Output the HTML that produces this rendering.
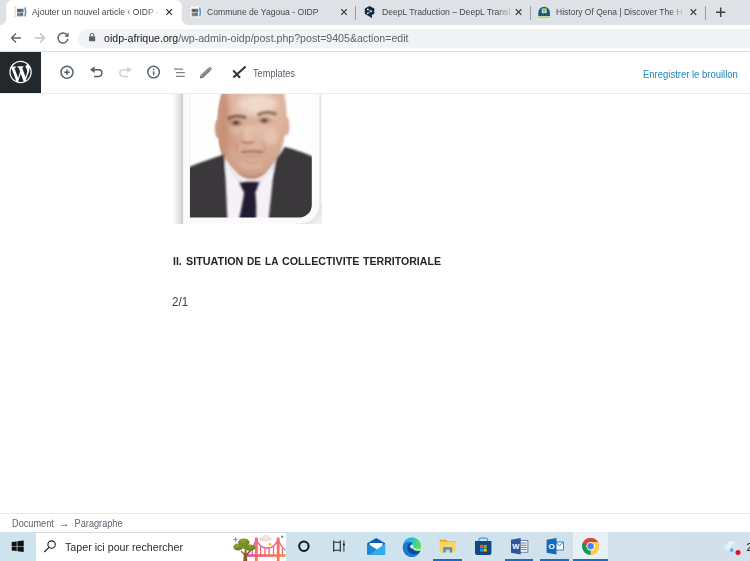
<!DOCTYPE html>
<html lang="fr">
<head>
<meta charset="utf-8">
<title>Ajouter un nouvel article ‹ OIDP</title>
<style>
html,body{margin:0;padding:0;}
body{width:750px;height:561px;overflow:hidden;background:#fff;position:relative;font-family:"Liberation Sans",sans-serif;color:#1e1e1e;}
.abs{position:absolute;}
.t{position:absolute;white-space:nowrap;line-height:1;filter:blur(0.3px);}
/* chrome tab strip */
#tabstrip{left:0;top:0;width:750px;height:25px;background:#dee1e6;}
#tab1{left:6px;top:0;width:176px;height:25px;background:#fff;border-radius:7px 7px 0 0;}
#toolbar{left:0;top:25px;width:750px;height:26px;background:#fff;border-bottom:1px solid #dcdde0;}
#omni{left:78px;top:29px;width:700px;height:19px;background:#f1f3f4;border-radius:10px;}
.tabtxt{font-size:9.500px;color:#45494d;top:7.400px;transform-origin:0 50%;}
.hw{top:255.200px;font-size:11.700px;font-weight:bold;color:#26262a;transform-origin:0 50%;}
.fade{-webkit-mask-image:linear-gradient(90deg,#000 0,#000 90%,rgba(0,0,0,0.200) 100%);mask-image:linear-gradient(90deg,#000 0,#000 90%,rgba(0,0,0,0.200) 100%);}
.sep{position:absolute;top:5.500px;width:1px;height:14px;background:#9a9fa5;}
/* wp header */
#wplogo{left:0;top:52px;width:41px;height:40.500px;background:#23282d;}
#wphead{left:0;top:52px;width:750px;height:40.500px;background:#fff;border-bottom:1.500px solid #eaecee;}
/* footer */
#wpfoot{left:0;top:513.200px;width:750px;height:19px;background:#fff;border-top:1px solid #e6e7e9;}
#taskbar{left:0;top:532px;width:750px;height:29px;background:linear-gradient(90deg,#cde4ee 0%,#cfe3ee 55%,#d3dfea 100%);}
#search{left:35.500px;top:532px;width:250.200px;height:29px;background:#fff;border-top:1px solid #d9d9d9;box-sizing:border-box;}
.ul{position:absolute;top:559px;height:2px;background:#1372c4;}
</style>
</head>
<body>

<!-- ===== Chrome tab strip ===== -->
<div id="tabstrip" class="abs"></div>
<svg class="abs" style="left:0;top:0;" width="200" height="26" viewBox="0 0 200 26"><path d="M0 25.500V25C3.500 25 6.300 22.200 6.300 18.700V6.300C6.300 2.800 9.100 0 12.600 0H175.400C178.900 0 181.700 2.800 181.700 6.300V18.700C181.700 22.200 184.500 25 188 25V25.500Z" fill="#fff"/></svg>
<div class="t tabtxt fade" style="left:32.300px;transform:scaleX(0.912);">Ajouter un nouvel article ‹ OIDP -</div>
<div class="t tabtxt" style="left:206.800px;transform:scaleX(0.905);">Commune de Yagoua - OIDP</div>
<div class="t tabtxt fade" style="left:382px;transform:scaleX(0.908);">DeepL Traduction – DeepL Transl</div>
<div class="t tabtxt fade" style="left:556.400px;transform:scaleX(0.896);">History Of Qena | Discover The H</div>
<div class="sep" style="left:355px;"></div>
<div class="sep" style="left:530px;"></div>
<div class="sep" style="left:705px;"></div>

<!-- ===== Chrome toolbar ===== -->
<div id="toolbar" class="abs"></div>
<div id="omni" class="abs"></div>
<div class="t" id="url" style="left:104px;top:32.5px;font-size:10.6px;color:#5f6368;"><span style="color:#202124">oidp-afrique.org</span>/wp-admin-oidp/post.php?post=9405&amp;action=edit</div>


<!-- chrome icons -->
<svg class="abs" style="left:0;top:0;" width="750" height="52" viewBox="0 0 750 52">
  <!-- tab close buttons -->
  <g stroke="#3c4043" stroke-width="1.25" stroke-linecap="butt" fill="none">
    <path d="M166.3 9.3l5.6 5.6M171.9 9.3l-5.6 5.6"/>
    <path d="M341.2 9.3l5.6 5.6M346.8 9.3l-5.6 5.6"/>
    <path d="M515.8 9.3l5.6 5.6M521.4 9.3l-5.6 5.6"/>
    <path d="M690.6 9.3l5.6 5.6M696.2 9.3l-5.6 5.6"/>
  </g>
  <!-- new tab plus -->
  <path d="M716 12.2h9.4M720.7 7.5v9.4" stroke="#3c4043" stroke-width="1.5" fill="none"/>
  <!-- back -->
  <path d="M21 38H12M16 33.6l-4.4 4.4 4.4 4.4" stroke="#5f6368" stroke-width="1.4" fill="none"/>
  <!-- forward -->
  <path d="M34.6 38H44M40 33.6l4.4 4.4-4.4 4.4" stroke="#c1c4c8" stroke-width="1.4" fill="none"/>
  <!-- reload -->
  <path d="M67.2 35.2A5 5 0 1 0 68 38.8" stroke="#5f6368" stroke-width="1.4" fill="none"/>
  <path d="M68.6 32.6v4.2h-4.2z" fill="#5f6368"/>
  <!-- lock -->
  <rect x="89" y="36.3" width="6.2" height="5" rx="0.6" fill="#5f6368"/>
  <path d="M90.4 36.5v-1.4a1.7 1.7 0 0 1 3.4 0v1.4" stroke="#5f6368" stroke-width="1" fill="none"/>
  <!-- favicons -->
  <defs><filter id="fb" x="-20%" y="-20%" width="140%" height="140%"><feGaussianBlur stdDeviation="0.350"/></filter></defs>
  <g filter="url(#fb)">
    <rect x="14.500" y="6.500" width="12.200" height="11" fill="#fafafa"/>
    <path d="M15.100 6.500v11" stroke="#f1b983" stroke-width="1" stroke-dasharray="1.600 0.700" fill="none"/>
    <rect x="17" y="8.800" width="6.600" height="3.400" fill="#6e6e6e"/>
    <rect x="17" y="12.600" width="6.200" height="3.700" fill="#858585"/>
    <rect x="18.200" y="9.600" width="2" height="1.400" fill="#4a4a4a"/>
    <rect x="21" y="13.300" width="1.800" height="1.600" fill="#5a5a5a"/>
    <path d="M25.100 7.300C25.700 10 25.700 13.500 25.100 16.300" stroke="#3a96d4" stroke-width="1.500" fill="none"/>
  </g>
  <g filter="url(#fb)" transform="translate(174.700 0)">
    <rect x="14.500" y="6.500" width="12.200" height="11" fill="#fafafa"/>
    <path d="M15.100 6.500v11" stroke="#f1b983" stroke-width="1" stroke-dasharray="1.600 0.700" fill="none"/>
    <rect x="17" y="8.800" width="6.600" height="3.400" fill="#6e6e6e"/>
    <rect x="17" y="12.600" width="6.200" height="3.700" fill="#858585"/>
    <rect x="18.200" y="9.600" width="2" height="1.400" fill="#4a4a4a"/>
    <rect x="21" y="13.300" width="1.800" height="1.600" fill="#5a5a5a"/>
    <path d="M25.100 7.300C25.700 10 25.700 13.500 25.100 16.300" stroke="#3a96d4" stroke-width="1.500" fill="none"/>
  </g>
  <!-- DeepL -->
  <path d="M369.500 6L374.300 8.600V13.700L371.900 15V18.200L369.300 16.400L364.800 13.700V8.600Z" fill="#0f2b46"/>
  <path d="M367.700 9.400L371.300 11.200L367.700 13.300" stroke="#fff" stroke-width="0.600" fill="none"/>
  <circle cx="367.700" cy="9.400" r="0.800" fill="#fff"/><circle cx="371.300" cy="11.200" r="0.800" fill="#fff"/><circle cx="367.700" cy="13.300" r="0.800" fill="#fff"/>
  <!-- History of Qena -->
  <path d="M538.300 16.100V12.600A5.850 5.850 0 0 1 550 12.600V16.100Z" fill="#1d5a80"/>
  <rect x="541.800" y="8.600" width="4.800" height="4.600" fill="#cfe6dc"/>
  <rect x="542.900" y="8" width="2.400" height="4.200" fill="#84c441"/>
  <path d="M540.600 13.600h7.200v2.300h-7.200z" fill="#173f5c"/>
  <path d="M541.800 13.800v2M543.600 13.800v2M545.400 13.800v2M547 13.800v2" stroke="#6f9bb5" stroke-width="0.500"/>
  <rect x="538.500" y="16.500" width="11.200" height="1.300" fill="#9ad65c"/>
</svg>

<!-- ===== WordPress editor header ===== -->
<div id="wphead" class="abs"></div>
<div id="wplogo" class="abs"></div>
<div class="t" id="tpl" style="left:252.800px;top:69.200px;font-size:10.300px;color:#555d66;transform-origin:0 50%;transform:scaleX(0.894);">Templates</div>
<div class="t" id="save" style="left:643.400px;top:69.500px;font-size:10.300px;color:#1a86bf;transform-origin:0 50%;transform:scaleX(0.921);">Enregistrer le brouillon</div>


<!-- wp header icons -->
<svg class="abs" style="left:0;top:52px;" width="320" height="41" viewBox="0 52 320 41">
  <g transform="translate(9.4 60.8) scale(1.12)">
    <path fill="#fff" d="M20 10c0-5.51-4.49-10-10-10C4.48 0 0 4.49 0 10c0 5.52 4.48 10 10 10 5.51 0 10-4.48 10-10zM7.78 15.37L4.37 6.22c.55-.02 1.17-.08 1.17-.08.5-.06.44-1.13-.06-1.11 0 0-1.45.11-2.37.11-.18 0-.37 0-.58-.01C4.12 2.69 6.87 1.11 10 1.11c2.33 0 4.45.87 6.05 2.34-.68-.11-1.65.39-1.65 1.58 0 .74.45 1.36.9 2.1.35.61.55 1.36.55 2.46 0 1.49-1.4 5-1.4 5l-3.03-8.37c.54-.02.82-.17.82-.17.5-.05.44-1.25-.06-1.22 0 0-1.44.12-2.38.12-.87 0-2.33-.12-2.33-.12-.5-.03-.56 1.2-.06 1.22l.92.08 1.26 3.41zM17.41 10c.24-.64.74-1.87.43-4.25.7 1.29 1.05 2.71 1.05 4.25 0 3.29-1.73 6.24-4.4 7.78.97-2.59 1.94-5.2 2.92-7.78zM6.1 18.09C3.12 16.65 1.11 13.53 1.11 10c0-1.3.23-2.48.72-3.59C3.25 10.3 4.67 14.2 6.1 18.09zm4.03-6.63l2.58 6.98c-.86.29-1.76.45-2.71.45-.79 0-1.57-.11-2.29-.33.81-2.38 1.62-4.74 2.42-7.1z"/>
  </g>
  <!-- add block -->
  <circle cx="67" cy="72.200" r="6" stroke="#555d66" stroke-width="1.450" fill="none"/>
  <path d="M64.300 72.200h5.400M67 69.500v5.400" stroke="#555d66" stroke-width="1.400" fill="none"/>
  <!-- undo -->
  <path d="M93.5 69.8h5.1a3.3 3.3 0 0 1 0 6.7h-4.6" stroke="#555d66" stroke-width="1.4" fill="none"/>
  <path d="M90 69.7l4.6-3.2v6.4z" fill="#555d66"/>
  <!-- redo -->
  <path d="M128.3 69.8h-5.1a3.3 3.3 0 0 0 0 6.7h4.6" stroke="#ced2d6" stroke-width="1.4" fill="none"/>
  <path d="M131.8 69.7l-4.6-3.2v6.4z" fill="#ced2d6"/>
  <!-- info -->
  <circle cx="153.600" cy="72.100" r="5.800" stroke="#555d66" stroke-width="1.400" fill="none"/>
  <path d="M153.6 71.3v4" stroke="#555d66" stroke-width="1.4" fill="none"/>
  <circle cx="153.6" cy="69.3" r="0.85" fill="#555d66"/>
  <!-- outline -->
  <path d="M174 69.1h9M176 72.7h8.800M176 76.300h8.800" stroke="#555d66" stroke-width="0.950" fill="none"/>
  <!-- pencil -->
  <path d="M200.400 78l0.700-2.700 7.300-7 2 2-7.300 7z" fill="#9aa0a6" stroke="#555d66" stroke-width="0.900" stroke-linejoin="round"/>
  <path d="M202.600 76.400l6.700-6.500" stroke="#555d66" stroke-width="0.700" fill="none"/>
  <path d="M209 67.800l1-0.900 2 2-1 0.900z" fill="#555d66"/>
  <!-- templates -->
  <path d="M233.4 77.6L245.6 66.4" stroke="#32373c" stroke-width="2.1" fill="none"/>
  <path d="M233.2 70.4L240 77.8" stroke="#32373c" stroke-width="2.1" fill="none"/>
</svg>

<!-- ===== Content ===== -->

<!-- portrait image block -->
<svg class="abs" id="portrait" style="left:166px;top:93px;" width="164" height="136" viewBox="166 93 164 136">
  <defs>
    <linearGradient id="shL" x1="0" x2="1" y1="0" y2="0">
      <stop offset="0" stop-color="#ffffff"/><stop offset="0.400" stop-color="#eeeeee"/><stop offset="1" stop-color="#cbcbcb"/>
    </linearGradient>
    <linearGradient id="shR" x1="0" x2="1" y1="0" y2="0">
      <stop offset="0" stop-color="#cfcfcf"/><stop offset="1" stop-color="#ececec"/>
    </linearGradient>
    <linearGradient id="shC" x1="0" x2="1" y1="0" y2="1">
      <stop offset="0" stop-color="#cccccc"/><stop offset="0.550" stop-color="#e2e2e2"/><stop offset="1" stop-color="#f3f3f3"/>
    </linearGradient>
    <clipPath id="photoClip"><path d="M190 90H311.800V205a12.500 12.500 0 0 1-12.500 12.500H190z"/></clipPath>
    <clipPath id="headClip"><path d="M222 92C219.500 101 217.400 110 217.400 120C217.300 132 218.400 143 221 152C222.500 157 224.500 160 227 161.800C230 166 232.500 169 235.500 171.800C239 175.200 243 178 247 178.900C250 179.500 254 179.500 257 178.700C261 177.600 265 174.600 268 171C271.500 167 274.500 163 276.500 160C279 157 280.500 153 281.500 149C284.500 139 286.600 129 286.600 119C286.600 110 285.800 100 283.800 92Z"/><ellipse cx="218" cy="128.500" rx="3" ry="9.500"/><ellipse cx="286.600" cy="126" rx="2.800" ry="9.500"/></clipPath>
    <filter id="b1" x="-10%" y="-10%" width="120%" height="120%"><feGaussianBlur stdDeviation="0.800"/></filter>
    <filter id="b2" x="-20%" y="-20%" width="140%" height="140%"><feGaussianBlur stdDeviation="2.200"/></filter>
    <filter id="b3" x="-30%" y="-30%" width="160%" height="160%"><feGaussianBlur stdDeviation="1.200"/></filter>
    <radialGradient id="skin" cx="0.560" cy="0.160" r="0.800">
      <stop offset="0" stop-color="#ecd1c1"/><stop offset="0.400" stop-color="#e0b9a4"/><stop offset="1" stop-color="#cd9d85"/>
    </radialGradient>
  </defs>
  <!-- left shadow -->
  <rect x="172" y="93" width="11.400" height="131" fill="url(#shL)"/>
  <!-- right shadow + corner -->
  <rect x="314" y="93" width="7.600" height="131" fill="url(#shR)"/>
  <rect x="296" y="204" width="25.600" height="20" fill="url(#shC)"/>
  <!-- white frame -->
  <path d="M183.400 93H319.400V204a19.500 19.500 0 0 1-19.500 19.500H183.400z" fill="#fbfbfb"/>
  <rect x="189.200" y="93" width="1" height="125" fill="#ebebef"/>
  <!-- photo -->
  <g clip-path="url(#photoClip)">
    <rect x="188" y="90" width="126" height="130" fill="#fefefe"/>
    <g filter="url(#b1)">
      <!-- shirt -->
      <path d="M223.600 155C226 163 232 171 240 176C246 179.500 258 179.500 264 176C271 171 276.500 163 279 154L284 149L272 217.500L270 222H222V160Z" fill="#f5f1f7"/>
      <!-- ears -->
      <ellipse cx="218" cy="128.500" rx="3" ry="9.500" fill="#c99a82"/>
      <ellipse cx="286.600" cy="126" rx="2.800" ry="9.500" fill="#d9ad97"/>
      <!-- head -->
      <path d="M222 92C219.500 101 217.400 110 217.400 120C217.300 132 218.400 143 221 152C222.500 157 224.500 160 227 161.800C230 166 232.500 169 235.500 171.800C239 175.200 243 178 247 178.900C250 179.500 254 179.500 257 178.700C261 177.600 265 174.600 268 171C271.500 167 274.500 163 276.500 160C279 157 280.500 153 281.500 149C284.500 139 286.600 129 286.600 119C286.600 110 285.800 100 283.800 92Z" fill="url(#skin)"/>
      <!-- under-chin shadow -->
      <path d="M236 172C240 176.500 245 178.700 251 178.900C257 178.900 263 176.200 267.500 171.500C263 174.500 257 175.600 251 175.600C245 175.600 240 174.600 236 172Z" fill="#b88a75" opacity="0.850"/>
    </g>
    <!-- face shading -->
    <g clip-path="url(#headClip)"><g filter="url(#b2)">
      <ellipse cx="223.500" cy="124" rx="6.500" ry="34" fill="#c48c72" opacity="0.800"/>
      <ellipse cx="258" cy="104" rx="19" ry="8" fill="#f1dccf" opacity="0.750"/>
      <ellipse cx="271" cy="137" rx="7" ry="8" fill="#efcfbd" opacity="0.600"/>
      <ellipse cx="233" cy="142" rx="7" ry="8" fill="#d0977f" opacity="0.650"/>
      <ellipse cx="248.500" cy="133" rx="3.500" ry="8" fill="#e8c6b2" opacity="0.600"/>
      <ellipse cx="251" cy="165" rx="13" ry="5" fill="#dfb7a1" opacity="0.700"/>
      <ellipse cx="250" cy="121" rx="26" ry="4.500" fill="#c9977f" opacity="0.450"/>
    </g></g>
    <g filter="url(#b3)">
      <!-- brows -->
      <path d="M228 119.300C231.500 116 238 115.200 246 117.600" stroke="#7a5744" stroke-width="3.200" fill="none" opacity="0.850"/>
      <path d="M257.500 115.200C262.500 112 270 111.700 276.500 114.200" stroke="#83604c" stroke-width="3.200" fill="none" opacity="0.800"/>
      <!-- eye sockets -->
      <ellipse cx="236" cy="122.800" rx="6.500" ry="3.400" fill="#b07f69" opacity="0.800"/>
      <ellipse cx="264.500" cy="120.300" rx="6.500" ry="3.400" fill="#b78771" opacity="0.750"/>
      <!-- eyes -->
      <ellipse cx="235.900" cy="122.700" rx="3" ry="1.800" fill="#4a2d22" opacity="0.900"/>
      <ellipse cx="264.300" cy="120.500" rx="3" ry="1.800" fill="#553629" opacity="0.900"/>
      <!-- nose -->
      <path d="M241.500 141C244 143.500 250 143.800 253.500 141.500" stroke="#ad7864" stroke-width="2" fill="none" opacity="0.900"/>
      <path d="M241.500 131C240.800 135 240.500 138 241.500 141" stroke="#c8977f" stroke-width="2" fill="none" opacity="0.450"/>
      <!-- nasolabial -->
      <path d="M237.500 143.500C236 147.500 236 151.500 237.500 154.500" stroke="#c1907b" stroke-width="1.500" fill="none" opacity="0.750"/>
      <path d="M262.500 142.500C265 146.500 265.500 150.500 264.500 154" stroke="#c4937e" stroke-width="1.500" fill="none" opacity="0.750"/>
      <!-- mouth -->
      <path d="M241.300 152.200C247 151.200 256 151.200 263 152.200" stroke="#ac6f66" stroke-width="2.200" fill="none"/>
      <path d="M244 155.500C249 157 255 157 260 155.500" stroke="#cf988a" stroke-width="2" fill="none" opacity="0.800"/>
      <path d="M245 162C249 163.500 255 163.500 259 162" stroke="#c4927a" stroke-width="1.500" fill="none" opacity="0.600"/>
    </g>
    <g filter="url(#b1)">
      <!-- collar shadow lines -->
      <path d="M226 161C230 170 236 178 243 183" stroke="#dcd5e1" stroke-width="1.200" fill="none"/>
      <path d="M277 158C273 168 266 177 257 183" stroke="#dcd5e1" stroke-width="1.200" fill="none"/>
      <!-- collar wings over the neck -->
      <path d="M223.600 155.500C226 163 231 171.500 239 182.600L243 188L231 181L225 170Z" fill="#f5f1f7"/>
      <path d="M279.500 153.500C277 162 271 172 259.800 182.200L256 188L268 181L276 168Z" fill="#f5f1f7"/>
      <!-- suit left -->
      <path d="M186 168.500C196 164 205 161 212 158.500C217 156.500 220.500 155.500 223.600 154.500C224.200 157 224.600 159 224.800 161C225.500 180 226.600 199 227.500 222H186Z" fill="#3a383a"/>
      <!-- suit right -->
      <path d="M316 158C310 155.500 304 153 299 151.300C294 149.500 289 148 284.500 147C282.500 151 279.500 155 276.500 158.600C274.500 166 273.500 174 272.600 181.500C271.500 193 270 206 268.400 222H316Z" fill="#3b393b"/>
      <!-- tie -->
      <path d="M238.600 182.600C245 181.500 254 181.400 260.200 182.100L255.200 192.400C256.400 200 256.400 209 256 222H238.500C240.500 212 243 201 244.200 192.400Z" fill="#221e32"/>
    </g>
  </g>
</svg>

<div class="abs" style="left:41px;top:92.500px;width:709px;height:1.500px;background:#eaecee;"></div>
<div id="h2"><span class="t hw" style="left:172.6px;transform:scaleX(0.902);">II.</span><span class="t hw" style="left:185.6px;transform:scaleX(0.923);">SITUATION</span><span class="t hw" style="left:247.3px;transform:scaleX(0.862);">DE</span><span class="t hw" style="left:265.3px;transform:scaleX(0.860);">LA</span><span class="t hw" style="left:282.0px;transform:scaleX(0.917);">COLLECTIVITE</span><span class="t hw" style="left:362.6px;transform:scaleX(0.905);">TERRITORIALE</span></div>
<div class="t" id="p21" style="left:172.1px;top:295.7px;font-size:12.2px;color:#444;transform-origin:0 50%;transform:scaleX(0.96);">2/1</div>

<!-- ===== WP footer breadcrumb ===== -->
<div id="wpfoot" class="abs"></div>
<div class="t" id="crumb" style="left:12.300px;top:519.200px;font-size:10px;color:#5c646c;transform-origin:0 50%;transform:scaleX(0.918);">Document &nbsp;<span style="font-size:11.500px;line-height:0;color:#444b52;">→</span>&nbsp; Paragraphe</div>

<!-- ===== Windows taskbar ===== -->
<div id="taskbar" class="abs"></div>
<div id="search" class="abs"></div>
<div class="t" id="stxt" style="left:65px;top:542.2px;font-size:10.68px;color:#2b2b2b;">Taper ici pour rechercher</div>
<div class="ul" style="left:433px;width:29px;"></div>
<div class="ul" style="left:505px;width:28px;"></div>
<div class="ul" style="left:540px;width:29px;"></div>
<div class="abs" style="left:573px;top:532px;width:35px;height:29px;background:#e6f0f5;"></div>
<div class="ul" style="left:573px;width:35px;"></div>

<!-- taskbar icons -->
<svg class="abs" style="left:0;top:532px;" width="750" height="29" viewBox="0 532 750 29">
  <defs>
    <linearGradient id="deck" x1="0" x2="1" y1="0" y2="0"><stop offset="0" stop-color="#ee3a9c"/><stop offset="1" stop-color="#f68b3a"/></linearGradient>
    <linearGradient id="tower" x1="0" x2="0" y1="0" y2="1"><stop offset="0" stop-color="#f16a78"/><stop offset="1" stop-color="#f5834f"/></linearGradient>
    <radialGradient id="canopy" cx="0.45" cy="0.3" r="0.7"><stop offset="0" stop-color="#9aa32c"/><stop offset="1" stop-color="#5d7a1f"/></radialGradient>
    <clipPath id="sbox"><rect x="35.500" y="532.600" width="250.200" height="28.400"/></clipPath>
    <linearGradient id="edgeg" x1="0" x2="1" y1="0.300" y2="0.500"><stop offset="0" stop-color="#2aa4ec"/><stop offset="0.450" stop-color="#2cc0d0"/><stop offset="0.750" stop-color="#4fd47a"/><stop offset="1" stop-color="#66dc4e"/></linearGradient>
  </defs>
  <!-- windows logo -->
  <path d="M11.700 542.100l5-0.700v4.500h-5zM17.400 541.300l6.300-0.900v5.500h-6.300zM11.700 546.600h5v4.500l-5-0.700zM17.400 546.600h6.300v5.500l-6.300-0.900z" fill="#111"/>
  <!-- search glass -->
  <circle cx="51.600" cy="544.600" r="3.700" stroke="#222" stroke-width="1.100" fill="none"/>
  <path d="M48.900 547.400l-4.600 4.600" stroke="#222" stroke-width="1.200" fill="none"/>
  <!-- bridge illustration -->
  <g clip-path="url(#sbox)">
    <path d="M235.500 536.600l0.800 2.100 2.100 0.800-2.100 0.800-0.800 2.100-0.800-2.100-2.100-0.800 2.100-0.800z" fill="#d56cf0"/>
    <ellipse cx="265.500" cy="538.800" rx="6.200" ry="2.600" fill="#ecd7da"/>
    <ellipse cx="266.500" cy="537.200" rx="3.400" ry="2.400" fill="#f3e4e6"/>
    <circle cx="270" cy="544.300" r="1.300" fill="#fcae16"/>
    <circle cx="282.200" cy="536.700" r="1.300" fill="#3fc45a"/>
    <!-- cables -->
    <path d="M256.300 538.500C259 551.500 275.500 551.500 278.100 538.500" stroke="#ef4f8c" stroke-width="1.300" fill="none"/>
    <path d="M256.300 538.500C254 548 250 553 244 556" stroke="#ee4a92" stroke-width="1.200" fill="none"/>
    <path d="M278.100 538.500C280 545.500 283 549.500 288 551.500" stroke="#f3705f" stroke-width="1.200" fill="none"/>
    <!-- suspenders -->
    <path d="M252.300 549.500v6M260.600 546.800v9M264.900 548.600v7M269.200 548.600v7M273.500 546.800v9M282.400 547.600v8" stroke="#f2677a" stroke-width="1.300" fill="none"/>
    <!-- towers -->
    <rect x="254.900" y="537.600" width="2.900" height="24" rx="0.800" fill="url(#tower)"/>
    <rect x="276.700" y="537.600" width="2.900" height="24" rx="0.800" fill="url(#tower)"/>
    <!-- deck -->
    <rect x="244" y="554.300" width="43" height="2.500" fill="url(#deck)"/>
    <!-- tree -->
    <path d="M243.200 561l0.700-6-3.300-3.600 1-0.700 2.800 2.700 0.400-3.400h1.500l0.300 3.600 3-3 1 0.800-3.700 4.200 0.400 5.400z" fill="#8a5a2a"/>
    <ellipse cx="243.800" cy="542.200" rx="5.600" ry="3.800" fill="url(#canopy)"/>
    <ellipse cx="238.200" cy="547" rx="4.700" ry="3.600" fill="url(#canopy)"/>
    <ellipse cx="249.500" cy="547.600" rx="6" ry="3.200" fill="url(#canopy)"/>
    <ellipse cx="244" cy="546" rx="5" ry="2.600" fill="#7b8f24"/>
  </g>
  <!-- cortana -->
  <circle cx="303.900" cy="546.300" r="4.700" stroke="#151515" stroke-width="2" fill="none"/>
  <!-- task view -->
  <path d="M333.700 540.500v11.200M340.300 540.500v11.200M333.700 542.200h6.600M333.700 550.300h6.600" stroke="#222" stroke-width="1.100" fill="none"/>
  <path d="M343.900 540.500v11.200" stroke="#222" stroke-width="0.900" fill="none"/>
  <circle cx="343.900" cy="544.600" r="1.100" fill="#222"/>
  <!-- mail -->
  <path d="M367.300 543.200l8.900-5.300 8.900 5.300v11.200h-17.800z" fill="#0f5fae"/>
  <path d="M369.800 543h12.800v5l-6.400 3-6.400-3z" fill="#fff"/>
  <path d="M367.300 543.400l17.800 11h-17.800z" fill="#1e86d6"/>
  <path d="M385.100 543.400v11h-15.500z" fill="#2fb0ee"/>
  <!-- edge -->
  <circle cx="412" cy="546.200" r="9" fill="url(#edgeg)"/>
  <path d="M403.200 544.800C405 541.600 409 541 412.300 542.600C409.500 544 408.800 547.500 410.500 550C412.500 553 417 553.200 420.400 551A9 9 0 0 1 403.200 544.800Z" fill="#1b78d3"/>
  <path d="M409 543.600C406.400 546 406.800 550.600 410 553C413.500 555.300 418 554 420.900 550.700C417.500 551.700 413.500 551 412 548.600C410.800 547 410.500 544.800 412.300 542.800C411 542.700 410 543 409 543.600Z" fill="#0e4a9c"/>
  <path d="M413 547.700C415 549.700 418.500 550.100 422 549.100" stroke="#cee4ee" stroke-width="1.400" fill="none"/>
  <circle cx="411.800" cy="546.500" r="1.700" fill="#f4f9fc"/>
  <!-- explorer -->
  <path d="M439.700 540.300a0.600 0.600 0 0 1 0.600-0.600h5.800l1.300 1.300h-7.700z" fill="#e3a21a"/>
  <rect x="439.700" y="541" width="15.700" height="11.600" rx="0.500" fill="#fbd364"/>
  <rect x="439.700" y="541" width="15.700" height="1.200" fill="#f3bf3e"/>
  <path d="M443.300 552.600v-5.400h8.800v5.400h-2.300v-3.200h-4.200v3.200z" fill="#3a8ee6"/>
  <!-- store -->
  <path d="M479 541.500v-1.700a1.600 1.600 0 0 1 1.600-1.600h5.300a1.600 1.600 0 0 1 1.600 1.600v1.700" stroke="#3aa5ea" stroke-width="1.200" fill="none"/>
  <path d="M475 541h16.400v12a2.100 2.100 0 0 1-2.100 2.100h-12.200a2.100 2.100 0 0 1-2.100-2.100z" fill="#17457f"/>
  <rect x="480" y="544.900" width="3.100" height="3.100" fill="#f25022"/><rect x="483.600" y="544.900" width="3.100" height="3.100" fill="#7fba00"/>
  <rect x="480" y="548.500" width="3.100" height="3.100" fill="#00a4ef"/><rect x="483.600" y="548.500" width="3.100" height="3.100" fill="#ffb900"/>
  <!-- word -->
  <rect x="519" y="540.500" width="8.900" height="11.700" fill="#fff" stroke="#2b579a" stroke-width="0.700"/>
  <path d="M521 543h5.600M521 545.200h5.600M521 547.400h5.600M521 549.600h5.600" stroke="#2b579a" stroke-width="0.800"/>
  <path d="M511 539.700l9.700-1.700v16.400l-9.700-1.700z" fill="#2b579a"/>
  <text x="515.900" y="549.400" font-family="Liberation Sans, sans-serif" font-weight="bold" font-size="7.600" fill="#fff" text-anchor="middle">W</text>
  <!-- outlook -->
  <rect x="555.500" y="542" width="7.900" height="8" fill="#fff" stroke="#0f6cbd" stroke-width="0.800"/>
  <path d="M556 542.500l3.500 3.200 3.500-3.200" stroke="#0f6cbd" stroke-width="0.900" fill="none"/>
  <path d="M546.600 539.700l9.900-1.700v16.400l-9.900-1.700z" fill="#0f6cbd"/>
  <text x="551.600" y="549.300" font-family="Liberation Sans, sans-serif" font-weight="bold" font-size="8" fill="#fff" text-anchor="middle">O</text>
  <!-- chrome -->
  <g transform="translate(590.600 546.300)">
    <circle r="8.400" fill="#db4437"/>
    <path d="M0 0L-7.270 -4.200A8.400 8.400 0 0 0 0 8.400L3.640 2.100Z" fill="#0f9d58"/>
    <path d="M-7.270 -4.200A8.400 8.400 0 0 0 0 8.400L4.200 0 0 0Z" fill="#0f9d58"/>
    <path d="M0 8.400A8.400 8.400 0 0 0 7.270 -4.200L0 -4.200L3.640 2.100Z" fill="#ffcd40"/>
    <path d="M0 0L0 8.400A8.400 8.400 0 0 0 7.270 -4.200L0 -4.200Z" fill="#ffcd40"/>
    <path d="M-7.270 -4.200A8.400 8.400 0 0 1 7.270 -4.200L0 -4.200Z" fill="#db4437"/>
    <path d="M-7.270 -4.200L0 -4.200L-3.640 2.100Z" fill="#db4437"/>
    <circle r="4.200" fill="#fff"/>
    <circle r="3.250" fill="#4285f4"/>
  </g>
  <!-- weather -->
  <ellipse cx="729" cy="547" rx="5" ry="3.300" fill="#dff0fb"/>
  <ellipse cx="731.500" cy="544.500" rx="4" ry="3.300" fill="#e6f4fd"/>
  <ellipse cx="735" cy="546.500" rx="4" ry="3.500" fill="#d4e6f5"/>
  <path d="M731.600 547.500c1 1.300 1.500 2 1.500 2.800a1.500 1.500 0 0 1-3 0c0-0.800 0.500-1.500 1.500-2.800z" fill="#4aa3f0"/>
  <circle cx="738" cy="552.400" r="2.500" fill="#e81123"/>
  <text x="746.600" y="550.900" font-family="Liberation Sans, sans-serif" font-size="10.800" fill="#111">2</text>
</svg>

</body>
</html>
